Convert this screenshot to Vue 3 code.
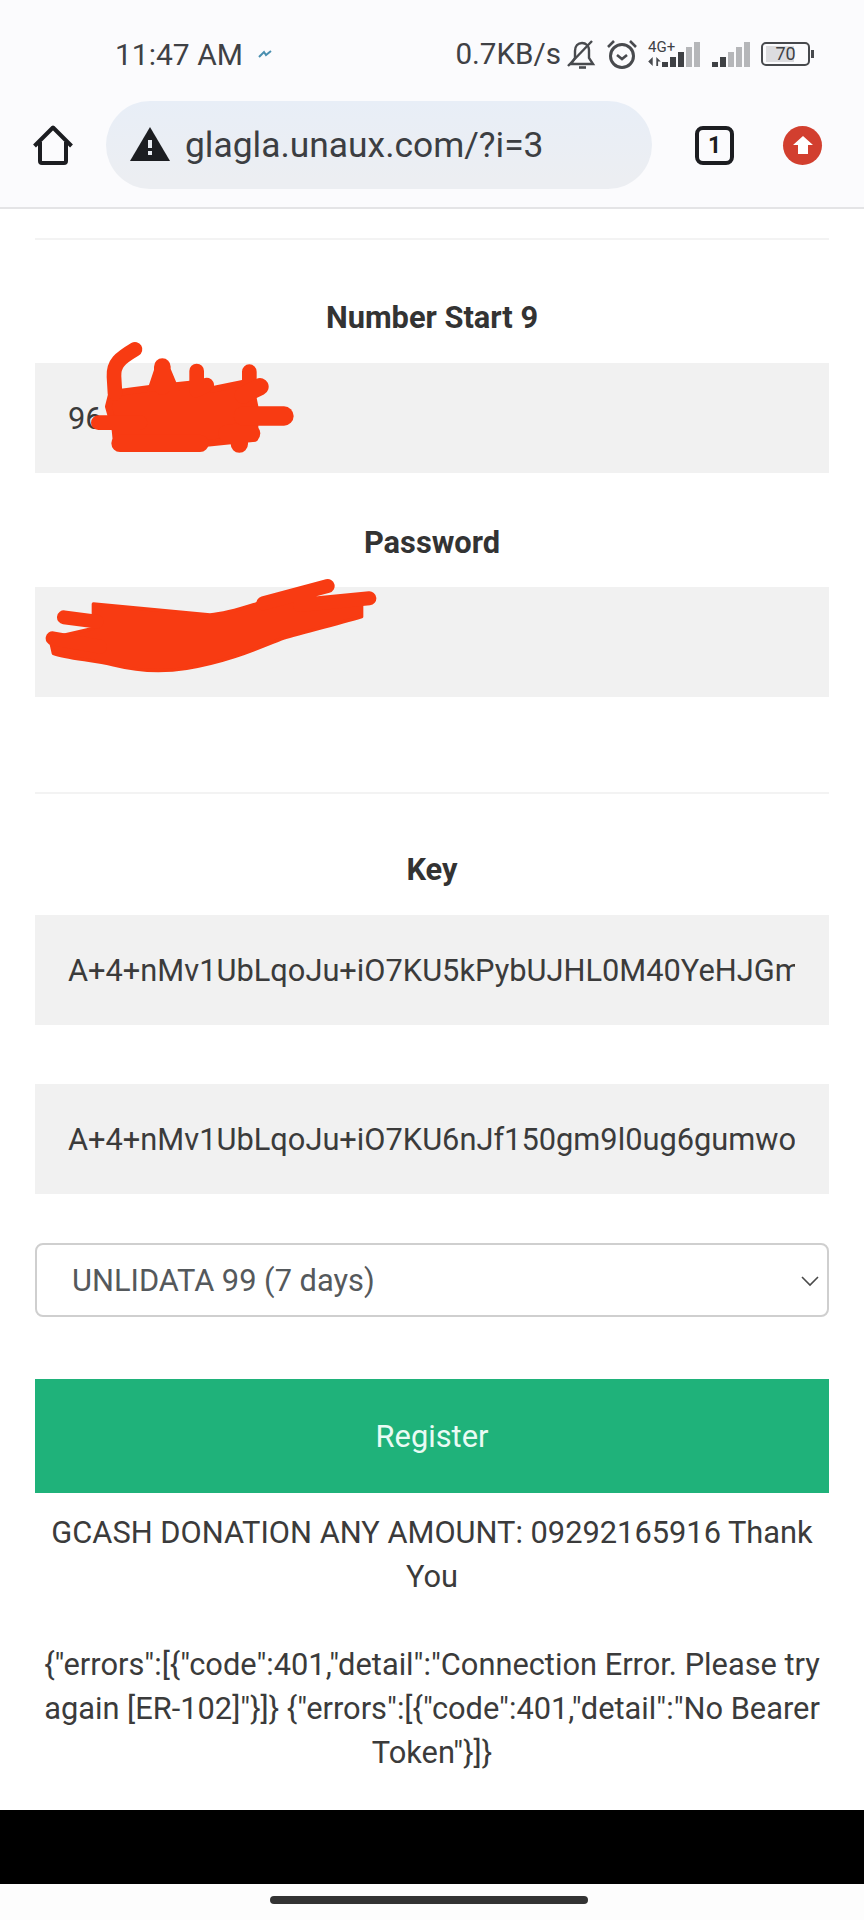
<script setup>
const keyOne = 'A+4+nMv1UbLqoJu+iO7KU5kPybUJHL0M40YeHJGmXz'
const keyTwo = 'A+4+nMv1UbLqoJu+iO7KU6nJf150gm9l0ug6gumwo'
const bars = [0, 1, 2, 3, 4]
</script>

<template>
  <div class="screen">
    <header class="browser">
      <div class="status">
        <div class="status-left">
          <span class="time">11:47 AM</span>
          <svg class="pulse" width="14" height="10" viewBox="0 0 14 10">
            <path d="M1 8 L6 3 L8 6 L13 2" fill="none" stroke="#4a8fb0" stroke-width="2" />
          </svg>
        </div>
        <div class="status-right">
          <span class="speed">0.7KB/s</span>
          <svg class="ico-bell" width="30" height="30" viewBox="0 0 30 30" fill="none" stroke="#484a4e" stroke-width="2.4">
            <path d="M5 25 H27 L23 19 V11 C23 7 20 4 16 4 C12 4 9 7 9 12 V19 Z" />
            <path d="M2 27 L26 2" />
            <path d="M13 28.500 H20" stroke-width="2.6" />
          </svg>
          <svg class="ico-alarm" width="32" height="30" viewBox="0 0 32 30" fill="none" stroke="#484a4e" stroke-width="3">
            <circle cx="16" cy="17" r="11.5" />
            <path d="M11 16 L16 20 L21 16" stroke-width="2.6" />
            <path d="M2 8 L8 2 M30 8 L24 2" stroke-width="2.6" />
          </svg>
          <div class="signal first">
            <span class="net">4G+</span>
            <svg class="arrows" width="13" height="9" viewBox="0 0 14 10" fill="#484a4e">
              <path d="M5 0 V10 L0 5 Z M9 0 L14 5 H11 V10 H9 Z" />
            </svg>
            <div class="bars">
              <i v-for="n in bars" :key="n" :class="{ off: n > 2 }" :style="{ height: 5 + n * 5 + 'px' }"></i>
            </div>
          </div>
          <div class="bars second">
            <i v-for="n in bars" :key="n" :class="{ off: n > 1 }" :style="{ height: 5 + n * 5 + 'px' }"></i>
          </div>
          <div class="battery">
            <div class="battery-body">
              <span class="battery-fill"></span>
              <span class="battery-num">70</span>
            </div>
            <span class="battery-tip"></span>
          </div>
        </div>
      </div>

      <div class="toolbar">
        <svg class="ico-home" width="42" height="42" viewBox="0 0 42 42" fill="none" stroke="#1c1d21" stroke-width="4" stroke-linejoin="round">
          <path d="M2.5 22 L21 3.500 L39.500 22 M8 18 V37 C8 38.500 9 39 10 39 H32 C33 39 34 38.500 34 37 V18" />
        </svg>
        <div class="address">
          <svg class="ico-warn" width="40" height="36" viewBox="0 0 40 36">
            <path d="M20 0 L40 34 H0 Z" fill="#1c1d21" />
            <rect x="18" y="13" width="4" height="8" fill="#e8ebf1" />
            <rect x="18" y="24" width="4" height="4" fill="#e8ebf1" />
          </svg>
          <span class="url">glagla.unaux.com/?i=3</span>
        </div>
        <div class="tabs">1</div>
        <div class="update">
          <svg width="20" height="18" viewBox="0 0 20 18">
            <path d="M10 0 L20 9 H15 V18 H5 V9 H0 Z" fill="#fff" />
          </svg>
        </div>
      </div>
    </header>

    <main class="page">
      <svg class="scribbles" width="432" height="480" viewBox="0 0 1296 1440">
        <g fill="#f83b12" stroke="#f83b12" stroke-linejoin="round" stroke-linecap="round">
          <path stroke-width="20" d="M335 490 L450 475 L570 462 L640 478 L750 455 L765 530 L765 625 L620 640 L350 650 L345 600 L325 530 Z" />
          <path stroke-width="44" fill="none" d="M405 358 C360 385 340 400 342 440 L345 490" />
          <path stroke-width="44" fill="none" d="M295 578 H420 M590 423 V480 M620 465 L590 480 M748 425 V490" />
          <path stroke-width="50" fill="none" d="M487 410 L487 470" />
          <path stroke-width="52" fill="none" d="M360 640 H600 M718 642 V600 M755 610 H680 M780 470 L730 495" />
          <path stroke-width="58" fill="none" d="M852 558 H730" />
          <path stroke-width="6" d="M445 480 L465 420 L510 420 L535 480 Z" />
          <path stroke-width="10" d="M280 1122 L630 1155 C690 1150 740 1130 800 1112 L1085 1115 L1085 1160 C1000 1185 900 1210 840 1228 C760 1260 680 1295 560 1315 C500 1325 420 1325 340 1305 C280 1290 200 1285 160 1270 L150 1225 L280 1195 Z" />
          <path stroke-width="42" fill="none" d="M192 1162 L290 1175 M158 1225 L300 1250 M790 1120 L983 1068 M900 1125 L1108 1105" />
        </g>
      </svg>

      <hr class="rule first-rule" />
      <label class="label first-label">Number Start 9</label>
      <input class="field" type="text" value="96" readonly />
      <label class="label password-label">Password</label>
      <input class="field" type="text" value="" readonly />
      <hr class="rule second-rule" />
      <label class="label key-label">Key</label>
      <input class="field" type="text" :value="keyOne" readonly />
      <input class="field second-key" type="text" :value="keyTwo" readonly />

      <div class="select-wrap">
        <select class="plan">
          <option>UNLIDATA 99 (7 days)</option>
        </select>
        <svg class="chevron" width="20" height="12" viewBox="0 0 20 12" fill="none" stroke="#4a4a4a" stroke-width="1.6">
          <path d="M2 2 L10 10 L18 2" />
        </svg>
      </div>

      <button type="button" class="register">Register</button>

      <p class="notes">GCASH DONATION ANY AMOUNT: 09292165916 Thank You</p>
      <p class="notes errors">{"errors":[{"code":401,"detail":"Connection Error. Please try again [ER-102]"}]} {"errors":[{"code":401,"detail":"No Bearer Token"}]}</p>
    </main>

    <div class="black-band"></div>
    <footer class="nav-bar">
      <span class="home-pill"></span>
    </footer>
  </div>
</template>

<style scoped>
.screen {
  display: flex;
  flex-direction: column;
  height: 1920px;
  background: #fff;
  color: #3b3b3b;
  font-family: Roboto, "Liberation Sans", sans-serif;
  overflow: hidden;
}

.browser {
  height: 207px;
  background: #fbfbfd;
  border-bottom: 2px solid #e4e4e6;
}

.status {
  display: flex;
  justify-content: space-between;
  align-items: center;
  height: 34px;
  padding: 37px 50px 0 115px;
  color: #3f4145;
}

.status-left {
  display: flex;
  align-items: center;
  gap: 15px;
}

.time {
  font-size: 30px;
}

.status-right {
  display: flex;
  align-items: center;
}

.speed {
  font-size: 29.6px;
  margin-right: 5px;
}

.ico-alarm {
  margin-left: 10px;
}

.signal {
  position: relative;
  display: flex;
  align-items: flex-end;
  gap: 1px;
  height: 25px;
  margin-left: 10px;
}

.net {
  position: absolute;
  left: 0;
  top: -2px;
  font-size: 15px;
  line-height: 14px;
}

.arrows {
  margin-bottom: 1px;
}

.bars {
  display: flex;
  align-items: flex-end;
  gap: 2px;
  height: 25px;
}

.bars i {
  display: block;
  width: 6px;
  background: #3f4145;
}

.bars i.off {
  background: #b5b6b9;
}

.second {
  margin-left: 12px;
}

.battery {
  display: flex;
  align-items: center;
  margin-left: 11px;
}

.battery-body {
  position: relative;
  width: 45px;
  height: 20px;
  border: 2px solid #47494d;
  border-radius: 5px;
}

.battery-fill {
  position: absolute;
  left: 3px;
  top: 2px;
  bottom: 2px;
  width: 28px;
  background: #dcdcdf;
}

.battery-num {
  position: absolute;
  inset: 0;
  text-align: center;
  font-size: 18px;
  line-height: 20px;
}

.battery-tip {
  width: 3px;
  height: 8px;
  margin-left: 1px;
  background: #47494d;
}

.toolbar {
  display: flex;
  align-items: center;
  height: 88px;
  margin-top: 30px;
  padding-left: 32px;
}

.ico-home {
  flex: none;
}

.address {
  display: flex;
  align-items: center;
  width: 546px;
  height: 88px;
  margin-left: 32px;
  padding-left: 24px;
  box-sizing: border-box;
  border-radius: 44px;
  background: linear-gradient(#e8eef7, #eceef2 90%);
}

.url {
  margin-left: 15px;
  font-size: 35.4px;
  color: #3c3e42;
}

.tabs {
  width: 31px;
  height: 31px;
  margin-left: 43px;
  border: 4px solid #1c1d21;
  border-radius: 8px;
  text-align: center;
  font-size: 23px;
  font-weight: 700;
  line-height: 31px;
  color: #1c1d21;
}

.update {
  display: flex;
  align-items: center;
  justify-content: center;
  width: 39px;
  height: 39px;
  margin-left: 49px;
  border-radius: 50%;
  background: #d23f2f;
}

.page {
  position: relative;
  flex: 1;
  padding: 0 35px;
}

.scribbles {
  position: absolute;
  left: 0;
  top: 21px;
  z-index: 2;
}

.rule {
  height: 2px;
  margin: 0;
  border: 0;
  background: #f3f3f3;
}

.first-rule {
  margin-top: 29px;
}

.second-rule {
  margin-top: 95px;
}

.label {
  display: block;
  margin: 47px 0 23px;
  font-size: 30.8px;
  font-weight: 700;
  line-height: 44px;
  text-align: center;
  color: #333;
}

.first-label {
  margin-top: 56px;
}

.password-label {
  margin: 48px 0 22px;
}

.key-label {
  margin-top: 54px;
}

.field {
  display: block;
  width: 100%;
  height: 110px;
  padding: 0 34px 0 33px;
  box-sizing: border-box;
  border: 0;
  outline: 0;
  background: #f1f1f1;
  font-family: inherit;
  font-size: 30.8px;
  color: #3b3b3b;
}

.second-key {
  margin-top: 59px;
}

.select-wrap {
  position: relative;
  margin-top: 49px;
}

.plan {
  display: block;
  width: 100%;
  height: 74px;
  padding: 0 35px;
  border: 2px solid #cfcfcf;
  border-radius: 8px;
  outline: 0;
  background: #fff;
  appearance: none;
  font-family: inherit;
  font-size: 30.8px;
  color: #55595c;
}

.chevron {
  position: absolute;
  right: 9px;
  top: 32px;
}

.register {
  display: block;
  width: 100%;
  height: 114px;
  margin-top: 62px;
  border: 0;
  background: #1fb27a;
  font-family: inherit;
  font-size: 30.8px;
  color: #e9fbf4;
}

.notes {
  margin: 18px 0 0;
  font-size: 30.8px;
  line-height: 44px;
  text-align: center;
}

.errors {
  margin-top: 44px;
}

.black-band {
  height: 74px;
  background: #000;
}

.nav-bar {
  display: flex;
  justify-content: center;
  height: 36px;
  padding: 12px 7px 0 0;
  box-sizing: border-box;
  background: #fdfdfd;
}

.home-pill {
  width: 318px;
  height: 8px;
  border-radius: 4px;
  background: #333;
}
</style>
